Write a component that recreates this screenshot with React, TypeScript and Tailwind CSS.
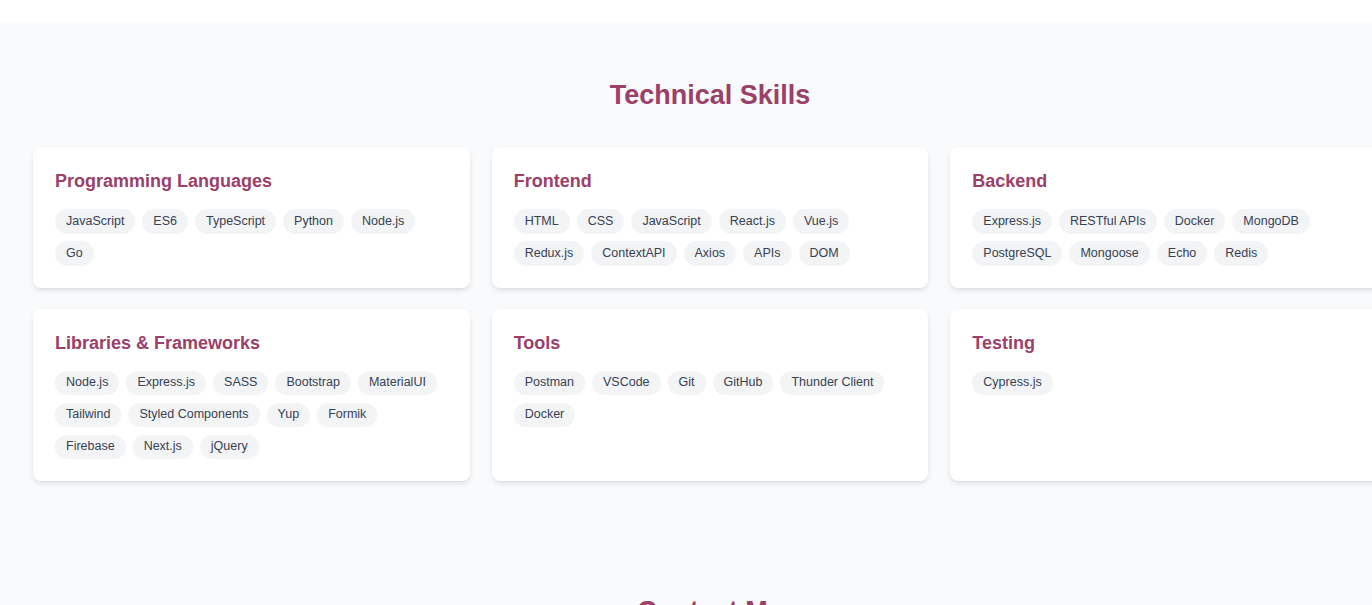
import React from 'react';

// skill groups shown in the grid
interface SkillGroup {
  title: string;
  items: string[];
}

const skillGroups: SkillGroup[] = [
  {
    title: 'Programming Languages',
    items: ['JavaScript', 'ES6', 'TypeScript', 'Python', 'Node.js', 'Go'],
  },
  {
    title: 'Frontend',
    items: ['HTML', 'CSS', 'JavaScript', 'React.js', 'Vue.js', 'Redux.js', 'ContextAPI', 'Axios', 'APIs', 'DOM'],
  },
  {
    title: 'Backend',
    items: ['Express.js', 'RESTful APIs', 'Docker', 'MongoDB', 'PostgreSQL', 'Mongoose', 'Echo', 'Redis'],
  },
  {
    title: 'Libraries & Frameworks',
    items: [
      'Node.js',
      'Express.js',
      'SASS',
      'Bootstrap',
      'MaterialUI',
      'Tailwind',
      'Styled Components',
      'Yup',
      'Formik',
      'Firebase',
      'Next.js',
      'jQuery',
    ],
  },
  {
    title: 'Tools',
    items: ['Postman', 'VSCode', 'Git', 'GitHub', 'Thunder Client', 'Docker'],
  },
  {
    title: 'Testing',
    items: ['Cypress.js'],
  },
];

function SkillCard({ group }: { group: SkillGroup }) {
  return (
    <div className="bg-white rounded-lg p-[22px] shadow-[0_3px_6px_-1px_rgba(0,0,0,0.12),0_1px_3px_-1px_rgba(0,0,0,0.06)]">
      <h3 className="text-[18px] leading-[24px] font-bold text-[#9a4069] mb-4">{group.title}</h3>
      <div className="flex flex-wrap gap-x-[7px] gap-y-[7.5px]">
        {group.items.map(item => (
          <span
            key={item}
            className="bg-gray-100 text-gray-700 rounded-full px-[11px] pt-[3.5px] pb-[4.5px] text-[12.5px] leading-[16.5px]"
          >
            {item}
          </span>
        ))}
      </div>
    </div>
  );
}

export default function App() {
  return (
    <div className="h-[605px] w-full overflow-hidden bg-gray-50 font-['Liberation_Sans',Arial,sans-serif]">
      {/* end of the previous (white) section */}
      <div className="h-[22px] bg-white" />

      <div className="w-[1420px]">
        <section className="px-[33px] pt-[57px] pb-[56px]">
          <h2 className="text-center text-[27px] leading-[1.2] font-bold text-[#9a4069] mb-[36px]">
            Technical Skills
          </h2>
          <div className="grid grid-cols-3 gap-x-[22px] gap-y-[21px]">
            {skillGroups.map(group => (
              <SkillCard key={group.title} group={group} />
            ))}
          </div>
        </section>

        <section className="px-[33px] pt-[58px]">
          <h2 className="text-center text-[27px] leading-[1.2] font-bold text-[#9a4069]">Contact Me</h2>
        </section>
      </div>
    </div>
  );
}
